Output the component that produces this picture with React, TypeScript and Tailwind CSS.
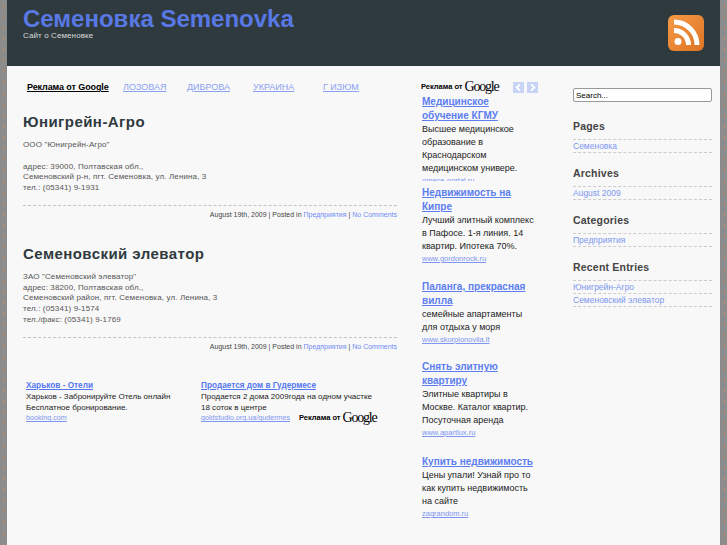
const SANS = "font-['Liberation_Sans',Arial,sans-serif]"

const NAV_LINKS = [
  { label: 'ЛОЗОВАЯ', width: 'w-[64px]' },
  { label: 'ДИБРОВА', width: 'w-[66px]' },
  { label: 'УКРАИНА', width: 'w-[70px]' },
  { label: 'Г ИЗЮМ', width: 'w-[60px]' },
]

const SIDE_ADS = [
  {
    title: ['Медицинское', 'обучение КГМУ'],
    text: ['Высшее медицинское', 'образование в', 'Краснодарском', 'медицинском универе.'],
    url: 'omece-portal.ru',
    box: 'h-[86px] overflow-hidden mb-[5px]',
  },
  {
    title: ['Недвижимость на', 'Кипре'],
    text: ['Лучший элитный комплекс', 'в Пафосе. 1-я линия. 14', 'квартир. Ипотека 70%.'],
    url: 'www.gordonrock.ru',
    box: 'mb-[15px]',
  },
  {
    title: ['Паланга, прекрасная', 'вилла'],
    text: ['семейные апартаменты', 'для отдыха у моря'],
    url: 'www.skorpionovila.lt',
    box: 'mb-[14px]',
  },
  {
    title: ['Снять элитную', 'квартиру'],
    text: ['Элитные квартиры в', 'Москве. Каталог квартир.', 'Посуточная аренда'],
    url: 'www.apartlux.ru',
    box: 'mb-[16px]',
  },
  {
    title: ['Купить недвижимость'],
    text: ['Цены упали! Узнай про то', 'как купить недвижимость', 'на сайте'],
    url: 'zagrandom.ru',
    box: '',
  },
]

const WIDGETS = [
  { title: 'Pages', links: ['Семеновка'] },
  { title: 'Archives', links: ['August 2009'] },
  { title: 'Categories', links: ['Предприятия'] },
  { title: 'Recent Entries', links: ['Юнигрейн-Агро', 'Семеновский элеватор'] },
]

function GoogleAds({ className }: { className: string }) {
  return (
    <span className={`inline-flex items-center text-black whitespace-nowrap ${className}`}>
      <span className="text-[7.5px] font-bold">Реклама от</span>
      <span className="font-['Liberation_Serif',serif] text-[14px] leading-[14px] tracking-[-1.2px] ml-[2px]">Google</span>
    </span>
  )
}

function Chevron({ d }: { d: string }) {
  return (
    <svg width="11" height="11" viewBox="0 0 12 12" className="bg-[#c8d4f6] shrink-0">
      <path d={d} fill="none" stroke="#fff" strokeWidth="2" />
    </svg>
  )
}

function RssIcon() {
  return (
    <svg width="36" height="36" viewBox="0 0 36 36" className="shrink-0 mt-[7px]">
      <defs>
        <linearGradient id="rss" x1="0" y1="0" x2="1" y2="1">
          <stop offset="0" stopColor="#f59a45" />
          <stop offset="1" stopColor="#dd7426" />
        </linearGradient>
      </defs>
      <rect width="36" height="36" rx="6" fill="url(#rss)" />
      <circle cx="10" cy="26.5" r="3.5" fill="#fff" />
      <path d="M6 15.5a14.5 14.5 0 0 1 14.5 14.5" fill="none" stroke="#fff" strokeWidth="5" />
      <path d="M6 7a23 23 0 0 1 23 23" fill="none" stroke="#fff" strokeWidth="5" />
    </svg>
  )
}

function Post({ title, lines, titleBox }: { title: string; lines: string[]; titleBox: string }) {
  return (
    <div>
      <h2 className={`text-[15px] font-bold text-[#2f3a3e] tracking-[0.45px] leading-[20px] ${titleBox}`}>{title}</h2>
      <div className="text-[8px] leading-[10.75px] text-[#555] tracking-[0.13px]">
        {lines.map((l, i) => (
          <div key={i} className="h-[10.75px] whitespace-nowrap">{l}</div>
        ))}
      </div>
      <div className="mt-[11px] border-t border-dashed border-[#c4c4c4] pt-[4px] text-right text-[7px] leading-[10px] text-[#444]">
        August 19th, 2009 | Posted in <a className="text-[#6f8cf5]">Предприятия</a> | <a className="text-[#6f8cf5]">No Comments</a>
      </div>
    </div>
  )
}

export default function App() {
  return (
    <div className={`${SANS} w-[727px] h-[545px] overflow-hidden bg-[#8c8c8c] bg-[radial-gradient(#c98a58_0.5px,transparent_1px)] bg-[length:7px_11px] px-[7px]`}>
      <div className="w-[713px] h-full bg-[#f8f8f8]">
        {/* Header */}
        <header className="h-[66px] bg-[#2f3a3e] flex justify-between pl-[16px] pr-[16px] pt-[8px]">
          <div>
            <h1 className="text-[24px] leading-[22px] font-bold text-[#5878e4] whitespace-nowrap">Семеновка Semenovka</h1>
            <p className="text-[8px] leading-[8px] mt-[2px] text-[#d8dcdc] tracking-[0.1px]">Сайт о Семеновке</p>
          </div>
          <RssIcon />
        </header>

        <div className="flex">
          {/* Main column */}
          <main className="w-[374px] ml-[16px] shrink-0">
            <nav className="flex items-center h-[16px] mt-[14px] ml-[4px] text-[9px] text-[#8aa2f2]">
              <a className="w-[96px] text-[9px] font-bold text-black underline whitespace-nowrap tracking-[-0.1px]">Реклама от Google</a>
              {NAV_LINKS.map(n => (
                <a key={n.label} className={`${n.width} underline whitespace-nowrap`}>{n.label}</a>
              ))}
            </nav>
            <Post
              title="Юнигрейн-Агро"
              titleBox="mt-[16px] mb-[8px]"
              lines={['ООО "Юнигрейн-Агро"', '', 'адрес: 39000, Полтавская обл.,', 'Семеновский р-н, пгт. Семеновка, ул. Ленина, 3', 'тел.: (05341) 9-1931']}
            />
            <Post
              title="Семеновский элеватор"
              titleBox="mt-[24px] mb-[8px]"
              lines={['ЗАО "Семеновский элеватор"', 'адрес: 38200, Полтавская обл.,', 'Семеновский район, пгт. Семеновка, ул. Ленина, 3', 'тел.: (05341) 9-1574', 'тел./факс: (05341) 9-1769']}
            />

            {/* Bottom ads */}
            <div className="flex mt-[29px] ml-[3px] text-[8px] leading-[10.5px] text-[#222]">
              <div className="w-[175px]">
                <a className="block text-[#5578f0] font-bold underline text-[8.25px] mb-[1px]">Харьков - Отели</a>
                <div>Харьков - Забронируйте Отель онлайн</div>
                <div>Бесплатное бронирование.</div>
                <a className="text-[#7d97f0] underline text-[7.2px]">booking.com</a>
              </div>
              <div className="whitespace-nowrap">
                <a className="block text-[#5578f0] font-bold underline text-[8.25px] mb-[1px]">Продается дом в Гудермесе</a>
                <div>Продается 2 дома 2009года на одном участке</div>
                <div>18 соток в центре</div>
                <div className="flex items-center h-[10.5px]">
                  <a className="text-[#7d97f0] underline w-[98px] overflow-hidden text-[7.2px]">goldstudio.org.ua/gudermes</a>
                  <GoogleAds className="" />
                </div>
              </div>
            </div>
          </main>

          {/* Text ad column */}
          <aside className="w-[118px] ml-[25px] shrink-0 pt-[13px]">
            <div className="flex items-center h-[16px] -ml-[1px]">
              <GoogleAds className="w-[92px]" />
              <Chevron d="M7.5 2.5L4 6l3.5 3.5" />
              <span className="w-[3px]" />
              <Chevron d="M4.5 2.5L8 6 4.5 9.5" />
            </div>
            {SIDE_ADS.map((ad, i) => (
              <div key={i} className={ad.box}>
                {ad.title.map(t => (
                  <a key={t} className="block text-[10px] leading-[14px] font-bold text-[#5c7ef0] underline whitespace-nowrap">{t}</a>
                ))}
                {ad.text.map(t => (
                  <div key={t} className="text-[9px] leading-[13px] text-[#222] whitespace-nowrap">{t}</div>
                ))}
                <a className="block text-[7.5px] leading-[12px] text-[#7d97f0] underline whitespace-nowrap">{ad.url}</a>
              </div>
            ))}
          </aside>

          {/* Sidebar */}
          <aside className="w-[139px] ml-[33px] shrink-0 pt-[22px]">
            <input
              readOnly
              value="Search..."
              className="w-full h-[14px] mb-[16px] border border-[#999] rounded-[2px] bg-white px-[2px] text-[8px] text-black outline-none block"
            />
            {WIDGETS.map(w => (
              <div key={w.title} className="mt-[12px]">
                <h3 className="text-[10.5px] leading-[16px] font-bold text-[#444] tracking-[0.2px] pb-[5px]">{w.title}</h3>
                <ul className="border-t border-dashed border-[#ccc]">
                  {w.links.map(l => (
                    <li key={l} className="h-[13px] border-b border-dashed border-[#ccc] text-[8.5px] leading-[12px] text-[#7d97f0] whitespace-nowrap">{l}</li>
                  ))}
                </ul>
              </div>
            ))}
          </aside>
        </div>
      </div>
    </div>
  )
}
